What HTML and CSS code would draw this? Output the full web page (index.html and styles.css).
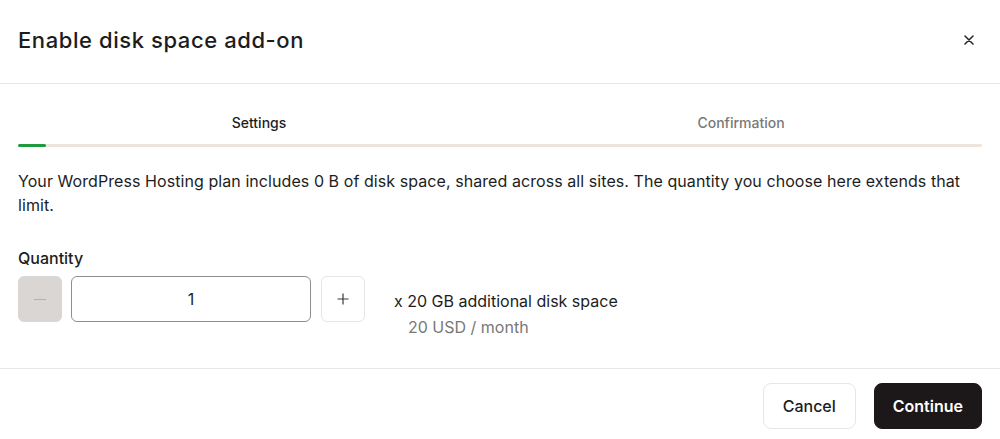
FILE: index.html
```html
<!DOCTYPE html>
<html lang="en">
<head>
<meta charset="utf-8">
<title>Enable disk space add-on</title>
<link rel="stylesheet" href="styles.css">
</head>
<body>
<div class="dialog">
  <header class="header">
    <h1 class="title">Enable disk space add-on</h1>
    <button class="close" aria-label="Close">
      <svg width="10" height="10" viewBox="0 0 10 10"><path d="M1 1L9 9M9 1L1 9" stroke="#2a2a2a" stroke-width="1.6" stroke-linecap="round"/></svg>
    </button>
  </header>
  <main class="content">
    <div class="stepper">
      <div class="tabs">
        <div class="tab active">Settings</div>
        <div class="tab">Confirmation</div>
      </div>
      <div class="track"><div class="fill"></div></div>
    </div>
    <p class="desc">Your WordPress Hosting plan includes 0 B of disk space, shared across all sites. The quantity you choose here extends that limit.</p>
    <div class="label">Quantity</div>
    <div class="qty-row">
      <button class="step minus" aria-label="Decrease"><span class="minus-bar"></span></button>
      <div class="input">1</div>
      <button class="step plus" aria-label="Increase">
        <svg width="12" height="12" viewBox="0 0 12 12"><path d="M6 0.5V11.5M0.5 6H11.5" stroke="#3a3a3a" stroke-width="1.2"/></svg>
      </button>
      <div class="info">
        <div class="info-main">x 20 GB additional disk space</div>
        <div class="info-price">20 USD / month</div>
      </div>
    </div>
  </main>
  <footer class="footer">
    <button class="btn secondary">Cancel</button>
    <button class="btn primary">Continue</button>
  </footer>
</div>
</body>
</html>
```
FILE: styles.css
```css
* { box-sizing: border-box; }
html, body { margin: 0; padding: 0; background: #fff; }
body {
  font-family: Inter, "Noto Sans", "Liberation Sans", sans-serif;
  color: #1d1d1d;
  width: 1000px;
  height: 439px;
  overflow: hidden;
}
button { font-family: inherit; cursor: pointer; }
.header {
  height: 84px;
  padding: 0 18px;
  display: flex;
  align-items: center;
  justify-content: space-between;
  border-bottom: 1px solid #e6e6e6;
}
.title {
  margin: 0;
  font-size: 22px;
  font-weight: 500;
  letter-spacing: 0.58px;
  line-height: 28px;
  padding-bottom: 4px;
}
.close {
  border: 0;
  background: transparent;
  width: 24px;
  height: 24px;
  display: flex;
  align-items: center;
  justify-content: center;
  margin-right: 1px;
  padding: 0;
  margin-bottom: 4px;
}
.content { padding: 0 18px; }
.stepper { padding-top: 29px; }
.tabs { display: flex; }
.tab {
  flex: 1;
  text-align: center;
  font-size: 14px;
  line-height: 20px;
  font-weight: 500;
  color: #787878;
}
.tab.active { color: #1d1d1d; }
.track {
  margin-top: 11px;
  height: 3px;
  background: #ece4dd;
  border-radius: 2px;
}
.fill {
  width: 28px;
  height: 3px;
  background: #1f9a3c;
  border-radius: 2px;
}
.desc {
  margin: 22px 0 0;
  font-size: 16px;
  line-height: 24px;
  letter-spacing: 0.07px;
}
.label {
  margin-top: 31px;
  font-size: 16px;
  line-height: 20px;
  font-weight: 500;
}
.qty-row {
  margin-top: 8px;
  display: flex;
  align-items: flex-start;
}
.step {
  width: 44px;
  height: 46px;
  border-radius: 6px;
  display: flex;
  align-items: center;
  justify-content: center;
  padding: 0;
}
.minus {
  background: #d9d6d3;
  border: 1px solid #d9d6d3;
}
.minus-bar {
  width: 12px;
  height: 1px;
  background: #b3afac;
}
.input {
  margin-left: 9px;
  width: 240px;
  height: 46px;
  border: 1px solid #8e8e8e;
  border-radius: 6px;
  display: flex;
  align-items: center;
  justify-content: center;
  font-size: 16px;
}
.plus {
  margin-left: 10px;
  background: #fff;
  border: 1px solid #e6e6e6;
}
.info {
  margin-left: 29px;
  padding-top: 13px;
  font-size: 16px;
}
.info-main { line-height: 24px; }
.info-price {
  line-height: 28px;
  padding-left: 14px;
  color: #787878;
}
.footer {
  margin-top: 27px;
  border-top: 1px solid #e6e6e6;
  padding: 14px 18px 0;
  display: flex;
  justify-content: flex-end;
  gap: 18px;
}
.btn {
  height: 46px;
  border-radius: 8px;
  font-size: 16px;
  font-weight: 500;
  padding: 0 19px;
}
.secondary {
  background: #fff;
  border: 1px solid #e6e6e6;
  color: #1d1d1d;
}
.primary {
  background: #1c1819;
  border: 1px solid #1c1819;
  color: #fff;
  font-weight: 600;
  padding: 0 18px;
}
```
